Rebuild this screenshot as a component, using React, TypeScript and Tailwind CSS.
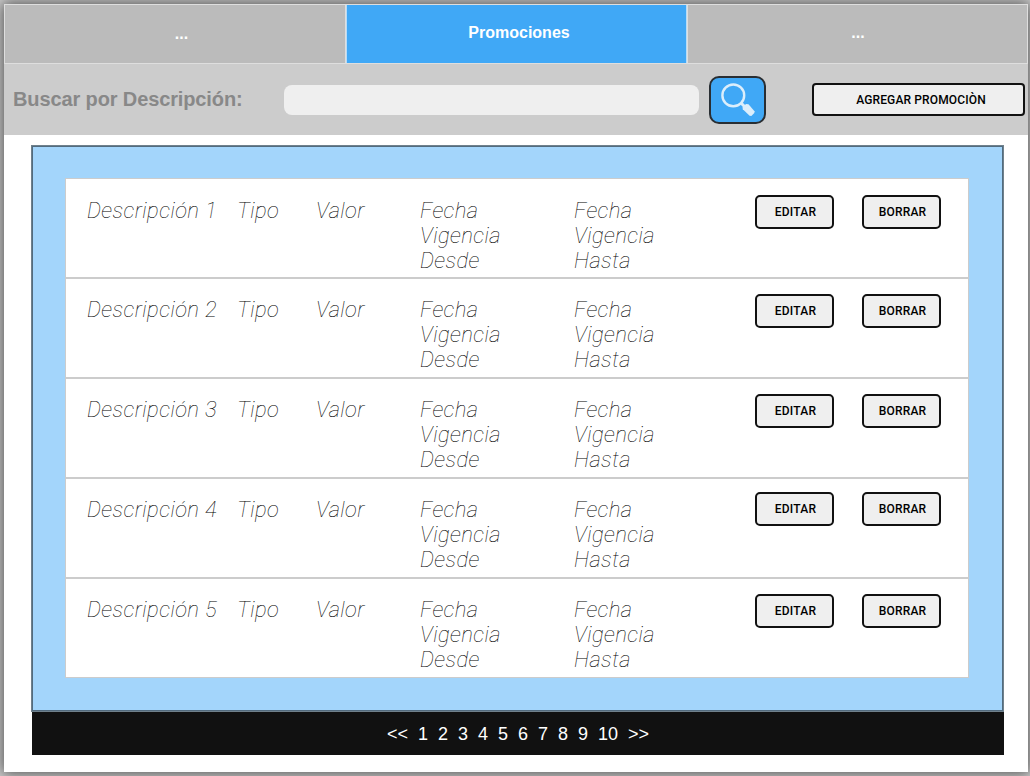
import React from "react";

const rows = [
  { id: 1, text: "pt-[19px]", buttons: "pt-[16px]" },
  { id: 2, text: "pt-[18px]", buttons: "pt-[15px]" },
  { id: 3, text: "pt-[18px]", buttons: "pt-[15px]" },
  { id: 4, text: "pt-[18px]", buttons: "pt-[13px]" },
  { id: 5, text: "pt-[18px]", buttons: "pt-[15px]" },
];

const pages = ["<<", "1", "2", "3", "4", "5", "6", "7", "8", "9", "10", ">>"];

function SearchIcon() {
  return (
    <svg width="53" height="44" viewBox="0 0 53 44" fill="none">
      <circle cx="22.3" cy="17.4" r="10.9" stroke="#dceefb" strokeWidth="2.4" />
      <path d="M30 25l3.5 3.5" stroke="#dceefb" strokeWidth="3" />
      <path d="M31.5 29.2l3.5-3.1 2.5.2 6 7-.2 1.8-3 2.8-1.7-.2-6.8-6.5z" fill="#dceefb" />
    </svg>
  );
}

function RowButton({ label }: { label: string }) {
  return (
    <button className="h-[34px] w-[79px] rounded-[5px] border-2 border-[#111] bg-[#efefef] pl-[2px] text-[12px] font-medium leading-[30px] tracking-[0.2px] text-black">
      {label}
    </button>
  );
}

export default function App() {
  return (
    <div className="h-[776px] w-[1030px] overflow-hidden bg-[#d0d0d0] pl-1 pt-1 font-['Liberation_Sans',Arial,sans-serif]">
      <main className="h-[768px] w-[1024px] bg-white shadow-[0_0_14px_2px_rgba(0,0,0,0.6)]">
        <nav className="flex h-[60px] border border-[#dedede] bg-[#bbb] text-[16px] font-bold leading-[18px] text-white">
          <div className="w-[341px] border-r border-[#dedede] pl-[13px] pt-[20px] text-center">...</div>
          <div className="w-[341px] border-x border-[#b6dcf8] bg-[#40a8f6] pl-[5px] pt-[19px] text-center">Promociones</div>
          <div className="w-[340px] border-l border-[#dedede] pl-px pt-[19px] text-center">...</div>
        </nav>
        <section className="flex h-[71px] bg-[#ccc]">
          <label className="w-[280px] pl-[9px] pt-[23px] text-[20px] font-bold leading-[24px] tracking-[-0.12px] text-[#888]">Buscar por Descripción:</label>
          <input className="mt-[21px] h-[30px] w-[415px] rounded-[8px] bg-[#efefef] outline-none" />
          <button className="ml-[10px] mt-[12px] h-[48px] w-[57px] rounded-[10px] border-2 border-[#292e33] bg-[#40a8f6]" aria-label="Buscar">
            <SearchIcon />
          </button>
          <button className="ml-[46px] mt-[19px] h-[33px] w-[213px] rounded-[4px] border-2 border-[#111] bg-[#efefef] pl-[5px] font-[Roboto,sans-serif] text-[12px] font-medium tracking-[0.14px] text-black">
            AGREGAR PROMOCIÒN
          </button>
        </section>
        <section className="ml-[27px] mt-[10px] h-[567px] w-[973px] border border-[#70818c] bg-[#a3d5fb]">
          <div className="h-full border border-[#526b7e] pl-[32px] pt-[31px]">
            <div className="w-[904px] border border-[#ccc] bg-white font-[Roboto,sans-serif]">
              {rows.map((row) => (
                <React.Fragment key={row.id}>
                  {row.id > 1 && <div className="h-[2px] bg-[#ccc]" />}
                  <div className="flex h-[98px]">
                    <div className={"flex pl-[21px] text-[22px] font-thin italic leading-[25px] tracking-[0.4px] text-black " + row.text}>
                      <div className="w-[150px] whitespace-nowrap">Descripción {row.id}</div>
                      <div className="w-[79px]">Tipo</div>
                      <div className="w-[104px]">Valor</div>
                      <div className="w-[154px]">Fecha<br />Vigencia<br />Desde</div>
                      <div className="w-[181px]">Fecha<br />Vigencia<br />Hasta</div>
                    </div>
                    <div className={"flex items-start gap-[28px] " + row.buttons}>
                      <RowButton label="EDITAR" />
                      <RowButton label="BORRAR" />
                    </div>
                  </div>
                </React.Fragment>
              ))}
            </div>
          </div>
        </section>
        <footer className="ml-[28px] flex h-[43px] w-[972px] justify-center gap-[10px] bg-[#111] pt-px text-[18px] leading-[42px] text-white">
          {pages.map((page) => (
            <span key={page}>{page}</span>
          ))}
        </footer>
      </main>
    </div>
  );
}
